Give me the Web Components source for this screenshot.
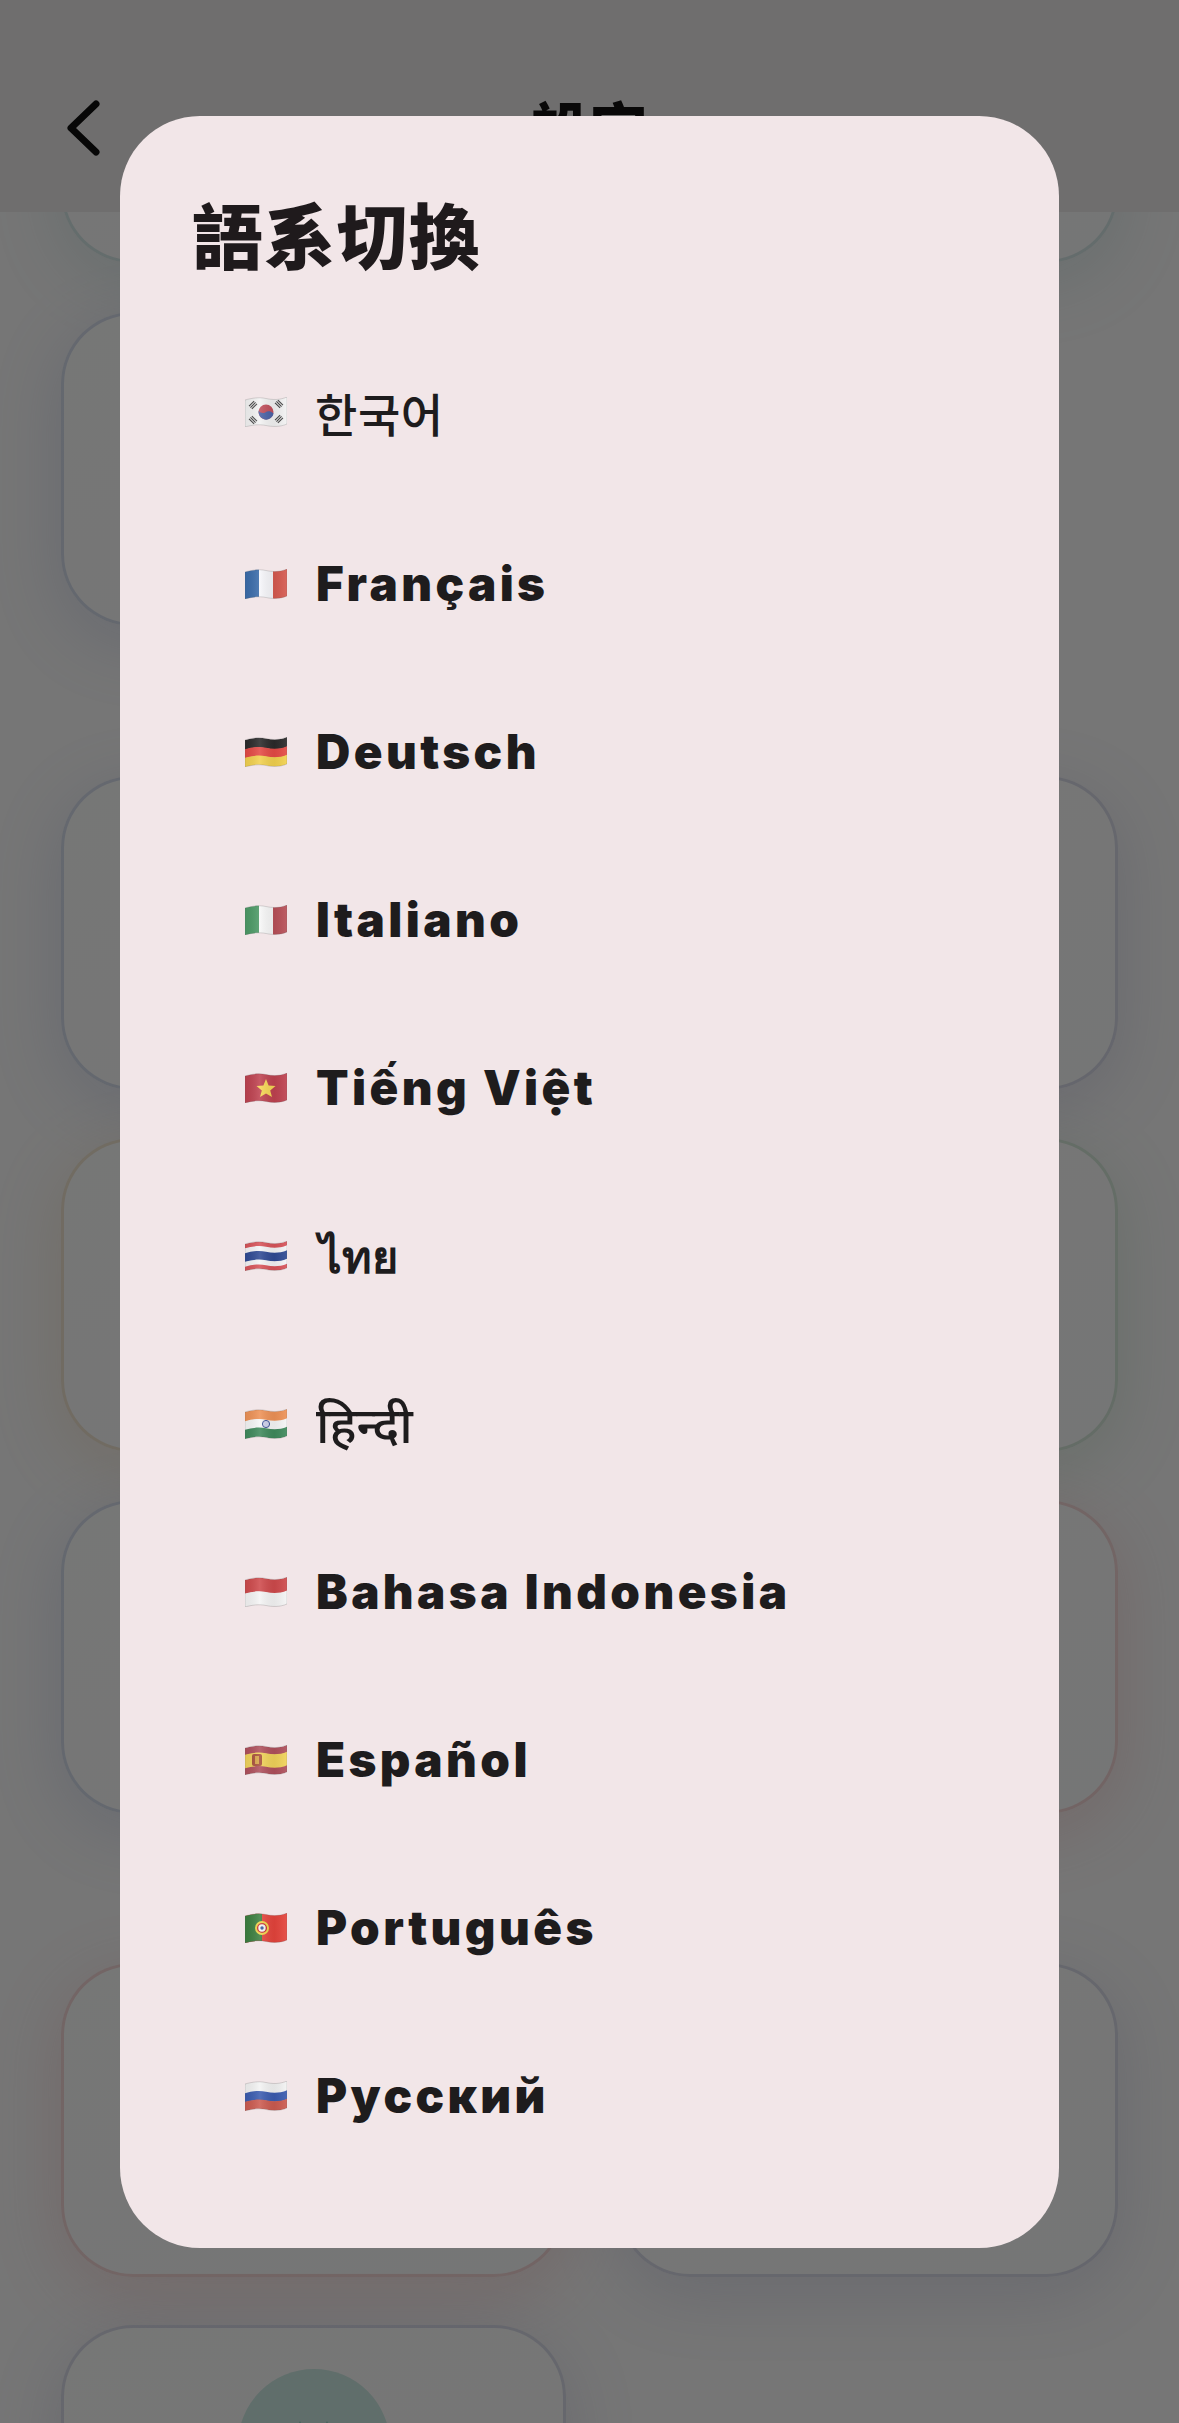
<!DOCTYPE html>
<html lang="zh-Hant"><head><meta charset="utf-8">
<style>
html,body{margin:0;padding:0;height:2423px;overflow:hidden;background:#f6f6f6}
body{position:relative;font-family:Inter,"Noto Sans CJK TC",sans-serif}
</style></head><body>
<settings-page></settings-page>
<language-dialog>
  <lang-row label="한국어" flag="kr" kind="cjk" first></lang-row>
  <lang-row label="Français" flag="fr"></lang-row>
  <lang-row label="Deutsch" flag="de"></lang-row>
  <lang-row label="Italiano" flag="it"></lang-row>
  <lang-row label="Tiếng Việt" flag="vn"></lang-row>
  <lang-row label="ไทย" flag="th" kind="thai"></lang-row>
  <lang-row label="हिन्दी" flag="in" kind="deva"></lang-row>
  <lang-row label="Bahasa Indonesia" flag="id"></lang-row>
  <lang-row label="Español" flag="es"></lang-row>
  <lang-row label="Português" flag="pt"></lang-row>
  <lang-row label="Русский" flag="ru"></lang-row>
</language-dialog>
<script>
class BgCard extends HTMLElement{
  constructor(){super();const c=this.getAttribute('tint')||'120,130,170';
    this.attachShadow({mode:'open'}).innerHTML=`<style>
    :host{display:block;height:314px;box-sizing:border-box;border-radius:72px;border:3px solid rgba(${c},.26);
      background:linear-gradient(160deg,#f7f8f7,#f5f6f6);box-shadow:0 16px 70px rgba(${c},.2);position:relative}
    :host([ghost]){visibility:hidden}
    </style><slot></slot>`;
  }
}
customElements.define('bg-card',BgCard);
class SettingsPage extends HTMLElement{
  constructor(){super();
    const r=(a,b,gap)=>`<div class="row" style="margin-top:${gap}px"><bg-card tint="${a}"></bg-card>${b?`<bg-card tint="${b}"></bg-card>`:'<bg-card ghost></bg-card>'}</div>`;
    const blue='110,130,190',gray='120,125,175',org='210,160,90',grn='110,170,120',red='220,110,110',teal='110,170,170';
    this.attachShadow({mode:'open'}).innerHTML=`<style>
    :host{display:block;height:2423px;overflow:hidden;background:#f6f6f6;color:#111}
    header{height:212px;box-sizing:border-box;background:#e9e7e7;display:flex;align-items:flex-start;position:relative;z-index:2}
    svg.back{margin:94px 0 0 60px;flex:none}
    h1{position:absolute;left:0;right:0;top:86px;margin:0;text-align:center;font:900 58px/80px "Noto Sans CJK TC",sans-serif;color:#141212}
    .grid{padding:0 61px;margin-top:-263px;display:block}
    .row{display:grid;grid-template-columns:505px 500px;column-gap:52px}
    .circ{width:152px;height:152px;border-radius:50%;background:#c9e6df;margin:41px auto 0;display:flex;justify-content:center}
    </style>
    <header>
      <svg class="back" width="44" height="68" viewBox="0 0 44 68" fill="none" stroke="#0f0f0f" stroke-width="7" stroke-linecap="round" stroke-linejoin="round"><path d="M36 10 11 34 36 58"/></svg>
      <h1>設定</h1>
    </header>
    <div class="grid">
      ${r(teal,teal,0)}
      ${r(blue,'',49)}
      ${r(blue,gray,150)}
      ${r(org,grn,48)}
      ${r(blue,red,48)}
      ${r(red,gray,149)}
      <div class="row" style="margin-top:48px"><bg-card tint="${gray}"><div class="circ"><svg width="50" height="70" viewBox="0 0 50 70" style="margin-top:52px"><path d="M4 40 11 0 18 40ZM31 40 38 0 45 40Z" fill="#1c9c8a"/></svg></div></bg-card><bg-card ghost></bg-card></div>
    </div>`;
  }
}
customElements.define('settings-page',SettingsPage);
class LanguageDialog extends HTMLElement{
  constructor(){super();
    this.attachShadow({mode:'open'}).innerHTML=`<style>
    :host{display:block;position:absolute;inset:0;background:rgba(0,0,0,.52);z-index:5}
    .box{position:absolute;left:120px;top:116px;width:939px;height:2132px;box-sizing:border-box;border-radius:80px;background:#f2e6e8;padding:73px 0 0 72px;color:#1f1a1c}
    h2{margin:0;font:900 71px/86px "Noto Sans CJK TC",sans-serif;color:#1f1a1c;letter-spacing:1.2px;height:86px}
    .list{display:flex;flex-direction:column;margin-top:49px}
    </style><div class="box"><h2>語系切換</h2><div class="list"><slot></slot></div></div>`;
  }
}
customElements.define('language-dialog',LanguageDialog);
const band=(f0,f1,c)=>{const a=27*f0,b=27*f1;
  return `<path fill="${c}" d="M0 ${3+a}C7 ${1+a} 14 ${a} 21 ${1.5+a}C28 ${3+a} 35 ${3+a} 42 ${a}V${b}C35 ${3+b} 28 ${3+b} 21 ${1.5+b}C14 ${b} 7 ${1+b} 0 ${3+b}Z"/>`};
const OUT='M0 3C7 1 14 0 21 1.5C28 3 35 3 42 0V27C35 30 28 30 21 28.5C14 27 7 28 0 30Z';
const wave=(body)=>`<svg width="42" height="30" viewBox="0 0 42 30"><defs><clipPath id="w"><path d="${OUT}"/></clipPath>
<linearGradient id="s" x1="0" x2="1" y1="0" y2="0"><stop offset="0" stop-color="#000" stop-opacity=".06"/><stop offset=".35" stop-color="#fff" stop-opacity=".12"/><stop offset=".7" stop-color="#000" stop-opacity=".06"/><stop offset="1" stop-color="#fff" stop-opacity=".08"/></linearGradient></defs>
<g clip-path="url(#w)">${body}<rect width="42" height="30" fill="url(#s)"/></g><path d="${OUT}" fill="none" stroke="#555" stroke-opacity=".3" stroke-width=".7"/></svg>`;
const tri=(x,y,r)=>`<g transform="translate(${x} ${y}) rotate(${r})" stroke="#444" stroke-width="1.1"><path d="M-3.6 -2H3.6M-3.6 0H3.6M-3.6 2H3.6"/></g>`;
const FLAGS={
 kr:`<rect width="42" height="30" fill="#f3f3f3"/><circle cx="21" cy="15" r="7.5" fill="#c04f5c"/><path d="M13.6 13.6c2 3 5 3 7 1.6s5-1.2 8 1.2A7.5 7.5 0 0 1 13.6 13.6Z" fill="#4a62a6"/>${tri(8,8,-45)}${tri(34,7,45)}${tri(8,23,45)}${tri(34,22,-45)}`,
 fr:`<rect width="14" height="30" fill="#3a6cab"/><rect x="14" width="14" height="30" fill="#f6f6fa"/><rect x="28" width="14" height="30" fill="#d65a50"/>`,
 de:band(0,.36,'#2a2a2a')+band(.34,.68,'#e54a45')+band(.66,1,'#f2d14e'),
 it:`<rect width="14" height="30" fill="#4c9a66"/><rect x="14" width="14" height="30" fill="#f7f7f7"/><rect x="28" width="14" height="30" fill="#b85058"/>`,
 vn:`<rect width="42" height="30" fill="#bf4250"/><polygon points="21,6 23.6,12.6 30.5,13 25.2,17.4 27,24 21,20.4 15,24 16.8,17.4 11.5,13 18.4,12.6" fill="#f6d655"/>`,
 th:band(0,.18,'#d8545a')+band(.16,.36,'#f4f4f6')+band(.34,.68,'#2f4a94')+band(.66,.86,'#f4f4f6')+band(.84,1,'#d8545a'),
 in:band(0,.36,'#ee9257')+band(.34,.68,'#f6f6f6')+band(.66,1,'#3f8a5c')+`<circle cx="21" cy="15" r="3.6" fill="#cdd0ea" stroke="#3a4f96" stroke-width="1"/>`,
 id:band(0,.52,'#cf4a4c')+band(.5,1,'#f5f5f5'),
 es:band(0,.27,'#b0505c')+band(.25,.77,'#f1d35a')+band(.75,1,'#b0505c')+`<rect x="7" y="9" width="10" height="12" rx="2" fill="#a8503a"/><rect x="10" y="11" width="4" height="8" fill="#d9a54a"/>`,
 pt:`<rect width="42" height="30" fill="#e5443c"/><rect width="17" height="30" fill="#3c7f3f"/><circle cx="17" cy="15" r="7" fill="#efd54a"/><circle cx="17" cy="15" r="4.4" fill="#f5f5f5" stroke="#c33" stroke-width="1.4"/><circle cx="17" cy="15" r="1.7" fill="#3c5a9a"/>`,
 ru:band(0,.36,'#f3f3f3')+band(.34,.68,'#3b5cb0')+band(.66,1,'#cc5b50')
};
class LangRow extends HTMLElement{
  constructor(){super();
    const k=this.getAttribute('kind');
    const fonts={cjk:'500 46px/62px "Noto Sans CJK KR"',thai:'600 45px/62px "Noto Sans"',deva:'500 50px/62px "Noto Sans"'};
    const font=fonts[k]||'900 47.5px/62px Inter';
    const spacing=k==='cjk'?'.6px':k?'0':'3.4px';
    const ml=k==='thai'?'3px':k==='cjk'?'-1px':'0';
    this.attachShadow({mode:'open'}).innerHTML=`<style>
    :host{display:flex;align-items:center;height:168px;padding-left:53px;gap:29px;color:#1e1c1d}
    :host([first]){height:176px}
    svg{flex:none;display:block}
    span{font:${font},"Noto Sans",sans-serif;letter-spacing:${spacing};white-space:nowrap;margin-left:${ml}}
    </style>${wave(FLAGS[this.getAttribute('flag')])}<span>${this.getAttribute('label')}</span>`;
  }
}
customElements.define('lang-row',LangRow);
</script>
</body></html>
